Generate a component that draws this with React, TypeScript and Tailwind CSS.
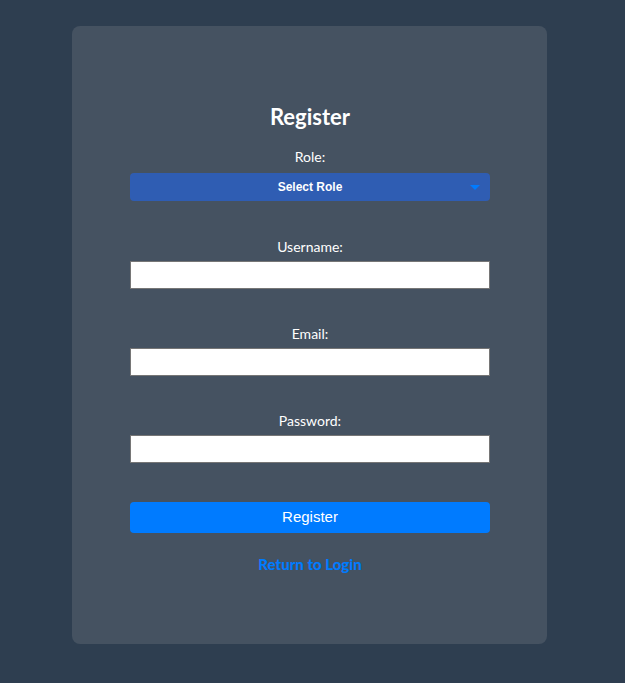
import React, { useState } from 'react';

const Field = ({ label, type }: { label: string; type: string }) => (
  <div className="mb-[36px]">
    <label className="block text-center text-[14px] leading-[17px] text-white mb-[6px]">{label}</label>
    <input
      type={type}
      className="block w-full h-[28px] bg-white border border-[#767676] px-2 text-[13px] text-black outline-none"
    />
  </div>
);

const App = () => {
  const [role, setRole] = useState('');

  return (
    <div className="min-h-[683px] bg-[#2e3e50] pt-[26px] font-['Lato','Open_Sans',sans-serif]">
      <div className="ml-[72px] w-[475px] h-[618px] rounded-[8px] bg-[#455261] pl-[58px] pr-[57px] pt-[78px]">
        <h2 className="text-center text-[22px] leading-[26px] font-bold text-white mb-[18px]">Register</h2>

        <div className="mb-[37px]">
          <label className="block text-center text-[14px] leading-[17px] text-white mb-[8px]">Role:</label>
          <div className="relative">
            <select
              value={role}
              onChange={(e) => setRole(e.target.value)}
              className="block w-full h-[28px] appearance-none rounded-[4px] bg-[#2f5db3] text-center text-[12px] font-bold text-white font-['Liberation_Sans',Arial,sans-serif] outline-none"
            >
              <option value="">Select Role</option>
              <option value="student">Student</option>
              <option value="teacher">Teacher</option>
            </select>
            <svg className="absolute right-[10px] top-[12px] pointer-events-none" width="10" height="5" viewBox="0 0 10 5">
              <path d="M0 0 L10 0 L5 5 Z" fill="#007bff" />
            </svg>
          </div>
        </div>

        <Field label="Username:" type="text" />
        <Field label="Email:" type="email" />
        <div className="mb-[39px]">
          <label className="block text-center text-[14px] leading-[17px] text-white mb-[6px]">Password:</label>
          <input
            type="password"
            className="block w-full h-[28px] bg-white border border-[#767676] px-2 text-[13px] text-black outline-none"
          />
        </div>

        <button className="block w-full h-[31px] rounded-[4px] bg-[#007bff] text-white text-[15px] font-['Liberation_Sans',Arial,sans-serif]">
          Register
        </button>

        <div className="mt-[22px] text-center leading-[18px]">
          <a href="#" className="text-[15px] font-black text-[#007bff]">Return to Login</a>
        </div>
      </div>
    </div>
  );
};

export default App;
